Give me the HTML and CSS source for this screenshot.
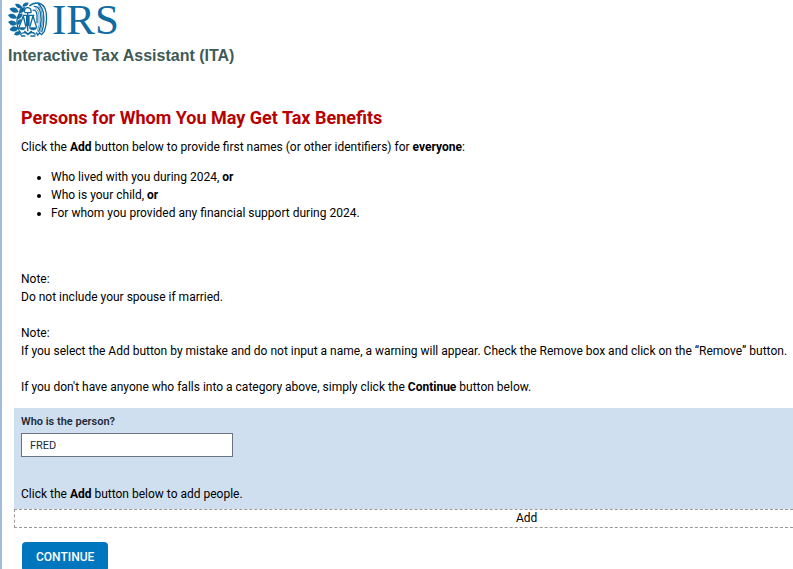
FILE: index.html
```html
<!DOCTYPE html>
<html lang="en">
<head>
<meta charset="utf-8">
<meta name="viewport" content="width=device-width, initial-scale=1">
<title>Interactive Tax Assistant (ITA)</title>
<link rel="stylesheet" href="styles.css">
</head>
<body>
<header class="site-header">
  <div class="brand">
    <svg class="emblem" viewBox="0 0 120 108" aria-hidden="true">
      <g class="ink">
        <path d="M21 6Q38 2 43 19Q27 23 21 6Z"/>
        <path d="M4 20Q24 10 32 30Q15 37 4 20Z"/>
        <path d="M0 39Q17 29 27 47Q11 57 0 39Z"/>
        <path d="M0 60Q15 49 27 65Q13 79 0 60Z"/>
        <path d="M5 84Q13 65 31 78Q24 96 5 84Z"/>
        <path d="M34 34Q31 14 50 17Q51 32 34 34Z"/>
        <path d="M28 53Q27 34 43 34Q45 48 28 53Z"/>
        <path d="M28 70Q25 53 38 51Q42 65 28 70Z"/>
        <path d="M43 14Q45 0 62 2Q59 15 43 14Z"/>
        <path d="M18 98Q24 83 39 90Q34 105 18 98Z"/>
        <path d="M29 76H55Q51 85 42 85Q33 84 29 76Z"/>
        <path d="M62 76H88Q85 85 76 85Q66 85 62 76Z"/>
        <path d="M54 42H65V72H54Z"/>
      </g>
      <path class="line" d="M50 16Q31 30 27 53Q25 75 38 93"/>
      <path class="line" d="M49 30Q50 15 60 17Q71 19 69 32H49M44 40H79M59 33V88M46 42L33 76M46 42L54 76M75 42L65 76M75 42L86 76"/>
      <path class="line" d="M64 12Q75 2 91 3Q110 7 114 30Q119 60 109 88L101 98L95 93L89 99L85 91M74 25Q86 22 87 40V64M77 13Q96 12 98 39Q102 65 92 91M90 5Q107 17 107 44Q109 69 101 91"/>
      <path class="feather" d="M82 18Q94 26 93 48Q96 66 88 88M91 11Q102 22 103 43Q105 65 97 89"/>
      <path class="line" d="M36 99Q48 85 60 98Q72 85 83 98M39 102H52M67 102H82M49 87L60 96L71 87"/>
    </svg>
    <span class="brand-name">IRS</span>
  </div>
  <p class="app-name">Interactive Tax Assistant (ITA)</p>
</header>
<main class="content">
  <div class="intro">
    <h1>Persons for Whom You May Get Tax Benefits</h1>
    <p>Click the <b>Add</b> button below to provide first names (or other identifiers) for <b>everyone</b>:</p>
    <ul>
      <li>Who lived with you during 2024, <b>or</b></li>
      <li>Who is your child, <b>or</b></li>
      <li>For whom you provided any financial support during 2024.</li>
    </ul>
    <p>Note:<br>Do not include your spouse if married.</p>
    <p>Note:<br>If you select the Add button by mistake and do not input a name, a warning will appear. Check the Remove box and click on the “Remove” button.</p>
    <p>If you don't have anyone who falls into a category above, simply click the <b>Continue</b> button below.</p>
  </div>
  <form>
    <div class="person">
      <label for="person-name">Who is the person?</label>
      <input id="person-name" type="text" value="FRED">
      <p>Click the <b>Add</b> button below to add people.</p>
    </div>
    <button class="add" type="button">Add</button>
    <button class="continue" type="submit">CONTINUE</button>
  </form>
</main>
</body>
</html>
```
FILE: styles.css
```css
* {
  box-sizing: border-box;
}

html {
  background: #fff;
}

body {
  margin: 0;
  min-height: 100vh;
  border-left: 2px solid #a0bbdc;
  font-family: Roboto, "Liberation Sans", sans-serif;
  font-size: 12px;
  line-height: 18px;
  color: #000;
}

p,
h1,
ul {
  margin: 0;
}

.site-header {
  padding-left: 6px;
}

.brand {
  display: flex;
  align-items: center;
  gap: 4px;
  height: 40px;
  color: #0f6ba0;
}

.emblem {
  width: 40px;
  height: 36px;
}

.ink {
  fill: currentColor;
}

.line,
.feather {
  fill: none;
  stroke: currentColor;
  stroke-width: 4;
}

.feather {
  stroke-width: 2;
}

.brand-name {
  font-family: "Liberation Serif", serif;
  font-size: 43px;
  line-height: 50px;
}

.app-name {
  padding-top: 4px;
  font-family: "Liberation Sans", sans-serif;
  font-size: 16px;
  font-weight: bold;
  line-height: 24px;
  color: #3f5a56;
}

.content {
  padding: 36px 0 0 12px;
}

.intro {
  padding-left: 7px;
}

h1 {
  margin-bottom: 7px;
  font-size: 18px;
  font-weight: 700;
  line-height: 27px;
  color: #b90000;
}

.intro p {
  margin-bottom: 18px;
}

ul {
  margin: -6px 0 48px;
  padding-left: 30px;
}

.intro p:last-child {
  margin-bottom: 12px;
}

.person {
  display: flex;
  flex-direction: column;
  align-items: flex-start;
  padding: 5px 7px 6px;
  background: #cfdfef;
}

.person label {
  font-size: 11px;
  font-weight: 600;
  color: #212b3a;
}

.person input {
  width: 212px;
  height: 24px;
  margin: 2px 0 28px;
  padding: 0 8px;
  border: 1px solid #6b7280;
  border-radius: 0;
  background: #fff;
  font: 11px Roboto, sans-serif;
  color: #212b3a;
}

button {
  display: block;
  font-family: inherit;
}

.add {
  width: 100%;
  padding: 0 0 0 501px;
  border: 1px dashed #999;
  border-right: 0;
  background: #fff;
  font-size: 12px;
  line-height: 17px;
  text-align: left;
  color: #000;
}

.continue {
  margin: 14px 0 0 8px;
  padding: 6px 14px;
  border: 0;
  border-radius: 4px;
  background: #0076be;
  font-size: 12px;
  font-weight: 500;
  line-height: 18px;
  color: #fff;
}
```
